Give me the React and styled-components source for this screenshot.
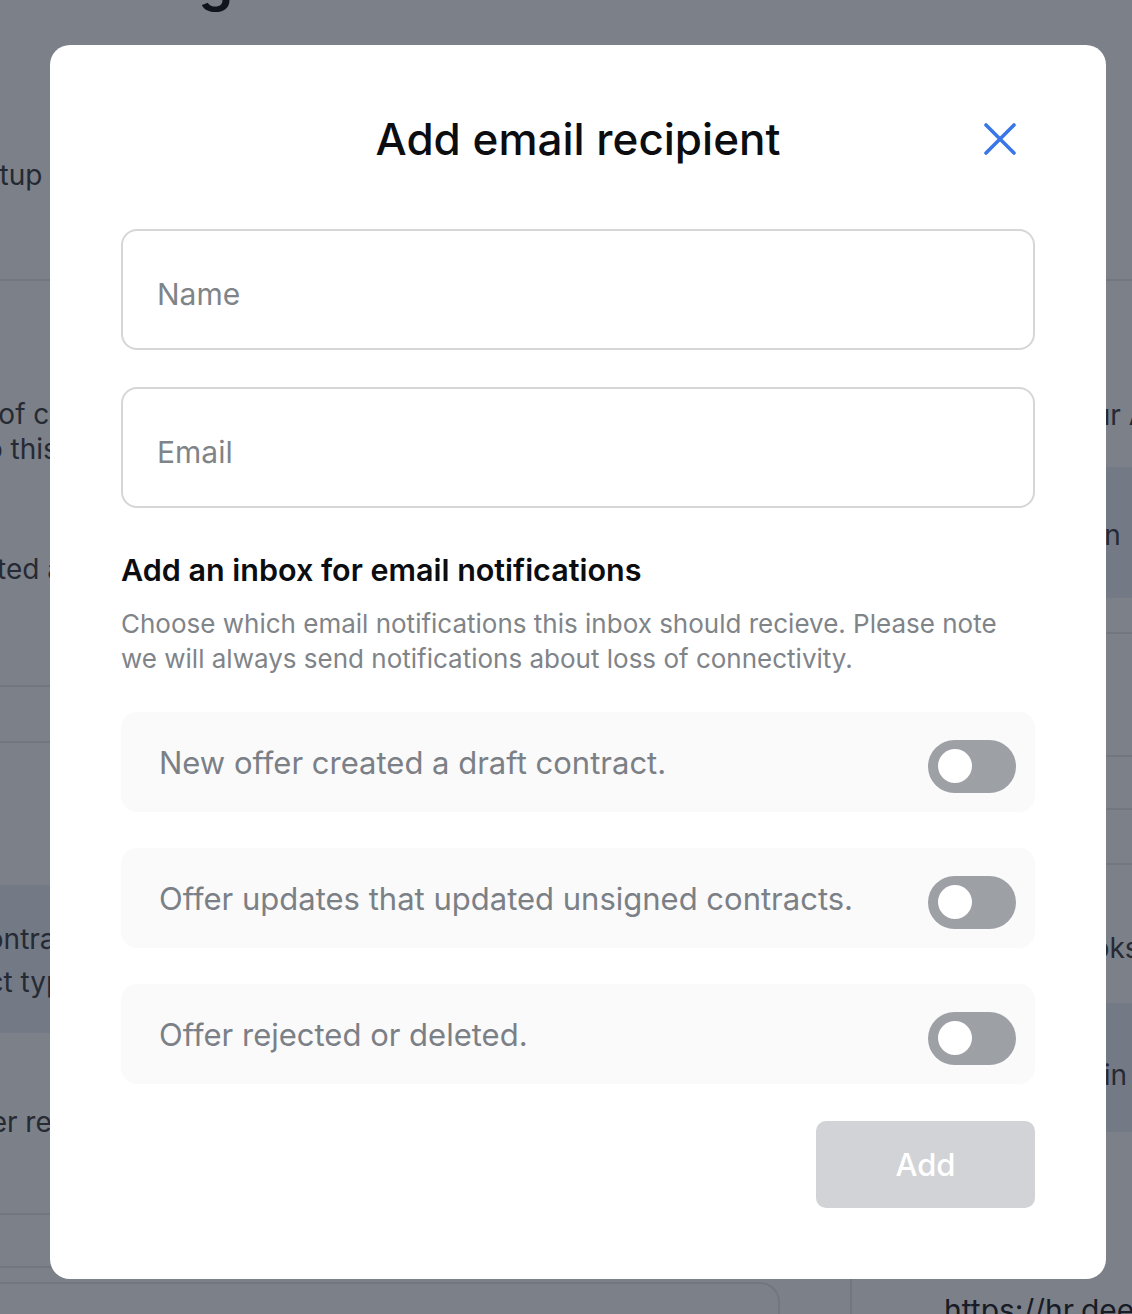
import React, { useState } from 'react'
import styled, { createGlobalStyle } from 'styled-components'

const GlobalStyle = createGlobalStyle`
  * {
    box-sizing: border-box;
  }
  html,
  body {
    margin: 0;
    padding: 0;
  }
  body {
    font-family: Inter, 'Noto Sans', sans-serif;
    background: #fff;
    overflow: hidden;
  }
`

const options = [
  { id: 'draft', label: 'New offer created a draft contract.' },
  { id: 'updates', label: 'Offer updates that updated unsigned contracts.' },
  { id: 'rejected', label: 'Offer rejected or deleted.' },
]

/* ---------- page behind the dialog ---------- */

const Screen = styled.div`
  position: relative;
  width: 1132px;
  height: 1314px;
  overflow: hidden;
  background: #fff;
  color: #3f4247;
`

const TopBar = styled.header`
  display: flow-root;
  height: 281px;
  padding-left: 42px;
  border-bottom: 2px solid #e6e8eb;
`

const PageTitle = styled.h1`
  margin: -48px 0 0;
  font-size: 56px;
  line-height: 56px;
  font-weight: 600;
  color: #111;
`

const Tabs = styled.nav`
  display: flex;
  gap: 48px;
  margin: 149px 0 0 -152px;
  font-size: 28px;
  line-height: 36px;
  color: #3a3d42;
`

const Columns = styled.div`
  display: flex;
  margin-left: -170px;
`

const LeftCol = styled.section`
  width: 950px;
  flex: none;
  display: flex;
  flex-direction: column;
`

const RightCol = styled.section`
  flex: 1;
  margin-left: 70px;
  display: flex;
  flex-direction: column;
`

const BgRow = styled.div`
  flex: none;
  height: ${(p) => p.$h}px;
  padding-top: ${(p) => p.$pt || 0}px;
  padding-left: ${(p) => p.$pl || 0}px;
  background: ${(p) => (p.$blue ? '#eaf1f8' : 'transparent')};
  border-bottom: ${(p) => (p.$line ? '2px solid #e6e8eb' : '0')};
  border-left: ${(p) => (p.$side ? '2px solid #e6e8eb' : '0')};
  font-size: 28px;
  line-height: ${(p) => p.$lh || 36}px;
  white-space: nowrap;
`

const BgLabel = styled.div`
  margin-top: ${(p) => p.$mt || 0}px;
`

const BgCard = styled.div`
  flex: 1;
  margin-top: 14px;
  border: 2px solid #e6e8eb;
  border-left: 0;
  border-bottom: 0;
  border-top-right-radius: 20px;
  background: #fff;
`

const LinkText = styled.span`
  font-size: 30px;
  color: #1f2227;
`

/* ---------- dialog ---------- */

const Overlay = styled.div`
  position: absolute;
  inset: 0;
  padding: 45px 0 0 24px;
  background: rgba(17, 24, 39, 0.55);
  display: flex;
  justify-content: center;
  align-items: flex-start;
`

const Dialog = styled.div`
  width: 1056px;
  padding: 71px;
  background: #fff;
  border-radius: 20px;
  display: flex;
  flex-direction: column;
`

const Header = styled.div`
  display: grid;
  grid-template-columns: 70px 1fr 70px;
  align-items: center;
  margin-bottom: 67px;
`

const Title = styled.h2`
  grid-column: 2;
  margin: 0;
  text-align: center;
  font-size: 44px;
  line-height: 46px;
  font-weight: 500;
  color: #0b0d10;
`

const CloseButton = styled.button`
  grid-column: 3;
  width: 70px;
  height: 46px;
  padding: 0;
  border: 0;
  background: none;
  display: flex;
  align-items: center;
  justify-content: center;
  color: #3b76e8;
  cursor: pointer;
`

const Fields = styled.div`
  display: flex;
  flex-direction: column;
  gap: 37px;
`

const Input = styled.input`
  height: 121px;
  padding: 8px 34px 0;
  border: 2px solid #d5d6d8;
  border-radius: 16px;
  font-family: Inter, 'Noto Sans', sans-serif;
  font-size: 30px;
  color: #111;
  outline: none;
  &::placeholder {
    color: #7f8489;
  }
`

const Intro = styled.div`
  margin: 44px 0 36px;
`

const SectionTitle = styled.h3`
  margin: 0 0 18px;
  font-size: 30.5px;
  line-height: 36px;
  font-weight: 600;
  color: #0b0d10;
`

const Hint = styled.p`
  margin: 0;
  font-size: 26px;
  line-height: 35px;
  color: #7f8489;
`

const Options = styled.div`
  display: flex;
  flex-direction: column;
  gap: 36px;
`

const Option = styled.label`
  height: 100px;
  padding: 0 19px 0 38px;
  border-radius: 16px;
  background: #fafafa;
  display: flex;
  align-items: center;
  justify-content: space-between;
  font-size: 31px;
  color: #7b8086;
`

const Track = styled.button`
  flex: none;
  width: 88px;
  height: 53px;
  margin-top: 8px;
  padding: 0 10px;
  border: 0;
  border-radius: 27px;
  background: ${(p) => (p.$on ? '#3b76e8' : '#9da1a5')};
  display: flex;
  align-items: center;
  justify-content: ${(p) => (p.$on ? 'flex-end' : 'flex-start')};
  cursor: pointer;
`

const Knob = styled.span`
  width: 34px;
  height: 34px;
  border-radius: 50%;
  background: #fff;
`

const Footer = styled.div`
  display: flex;
  justify-content: flex-end;
  margin-top: 37px;
`

const AddButton = styled.button`
  width: 219px;
  height: 87px;
  border: 0;
  border-radius: 10px;
  background: #d2d3d6;
  color: #fff;
  font-family: Inter, 'Noto Sans', sans-serif;
  font-size: 31px;
  font-weight: 500;
`

const CloseIcon = () => (
  <svg width="32" height="32" viewBox="0 0 32 32" fill="none">
    <path
      d="M2 2 30 30M30 2 2 30"
      stroke="currentColor"
      strokeWidth="3.6"
      strokeLinecap="round"
    />
  </svg>
)

const Switch = ({ on, onToggle }) => (
  <Track type="button" role="switch" aria-checked={on} $on={on} onClick={onToggle}>
    <Knob />
  </Track>
)

const App = () => {
  const [enabled, setEnabled] = useState({})

  const toggle = (id) => setEnabled((prev) => ({ ...prev, [id]: !prev[id] }))

  return (
    <>
      <GlobalStyle />
      <Screen>
        <TopBar>
          <PageTitle>Settings</PageTitle>
          <Tabs>
            <span>Email setup</span>
            <span>Integrations</span>
          </Tabs>
        </TopBar>
        <Columns>
          <LeftCol>
            <BgRow $h={406} $pt={116} $lh={35} $line>
              The number of candidates shown here
              <br />
              then apply to this page
              <BgLabel $mt={85}>Is disconnected after a while</BgLabel>
            </BgRow>
            <BgRow $h={56} $line />
            <BgRow $h={142} />
            <BgRow $h={148} $pt={33} $lh={43} $blue>
              Use these contract templates
              <br />
              each contract type
            </BgRow>
            <BgRow $h={182} $pt={71} $line>
              When an offer receives a reply
            </BgRow>
            <BgRow $h={53} $line />
            <BgCard />
          </LeftCol>
          <RightCol>
            <BgRow $h={186} $pt={116} $pl={92}>
              Connect your API key
            </BgRow>
            <BgRow $h={131} $pt={50} $pl={92} $blue>
              Manage login
            </BgRow>
            <BgRow $h={36} $line />
            <BgRow $h={123} $line />
            <BgRow $h={53} $line />
            <BgRow $h={55} $line />
            <BgRow $h={138} $pt={65} $pl={92}>
              Add webhooks
            </BgRow>
            <BgRow $h={129} $pt={54} $pl={92} $blue>
              Revoke admin
            </BgRow>
            <BgRow $h={200} $pt={160} $pl={92} $side>
              <LinkText>https://hr.deel.com/webhooks</LinkText>
            </BgRow>
          </RightCol>
        </Columns>

        <Overlay>
          <Dialog role="dialog" aria-labelledby="recipient-title">
            <Header>
              <Title id="recipient-title">Add email recipient</Title>
              <CloseButton type="button" aria-label="Close">
                <CloseIcon />
              </CloseButton>
            </Header>

            <Fields>
              <Input type="text" placeholder="Name" />
              <Input type="email" placeholder="Email" />
            </Fields>

            <Intro>
              <SectionTitle>Add an inbox for email notifications</SectionTitle>
              <Hint>
                Choose which email notifications this inbox should recieve. Please note
                we will always send notifications about loss of connectivity.
              </Hint>
            </Intro>

            <Options>
              {options.map((o) => (
                <Option key={o.id}>
                  {o.label}
                  <Switch on={!!enabled[o.id]} onToggle={() => toggle(o.id)} />
                </Option>
              ))}
            </Options>

            <Footer>
              <AddButton type="button" disabled>
                Add
              </AddButton>
            </Footer>
          </Dialog>
        </Overlay>
      </Screen>
    </>
  )
}

export default App
